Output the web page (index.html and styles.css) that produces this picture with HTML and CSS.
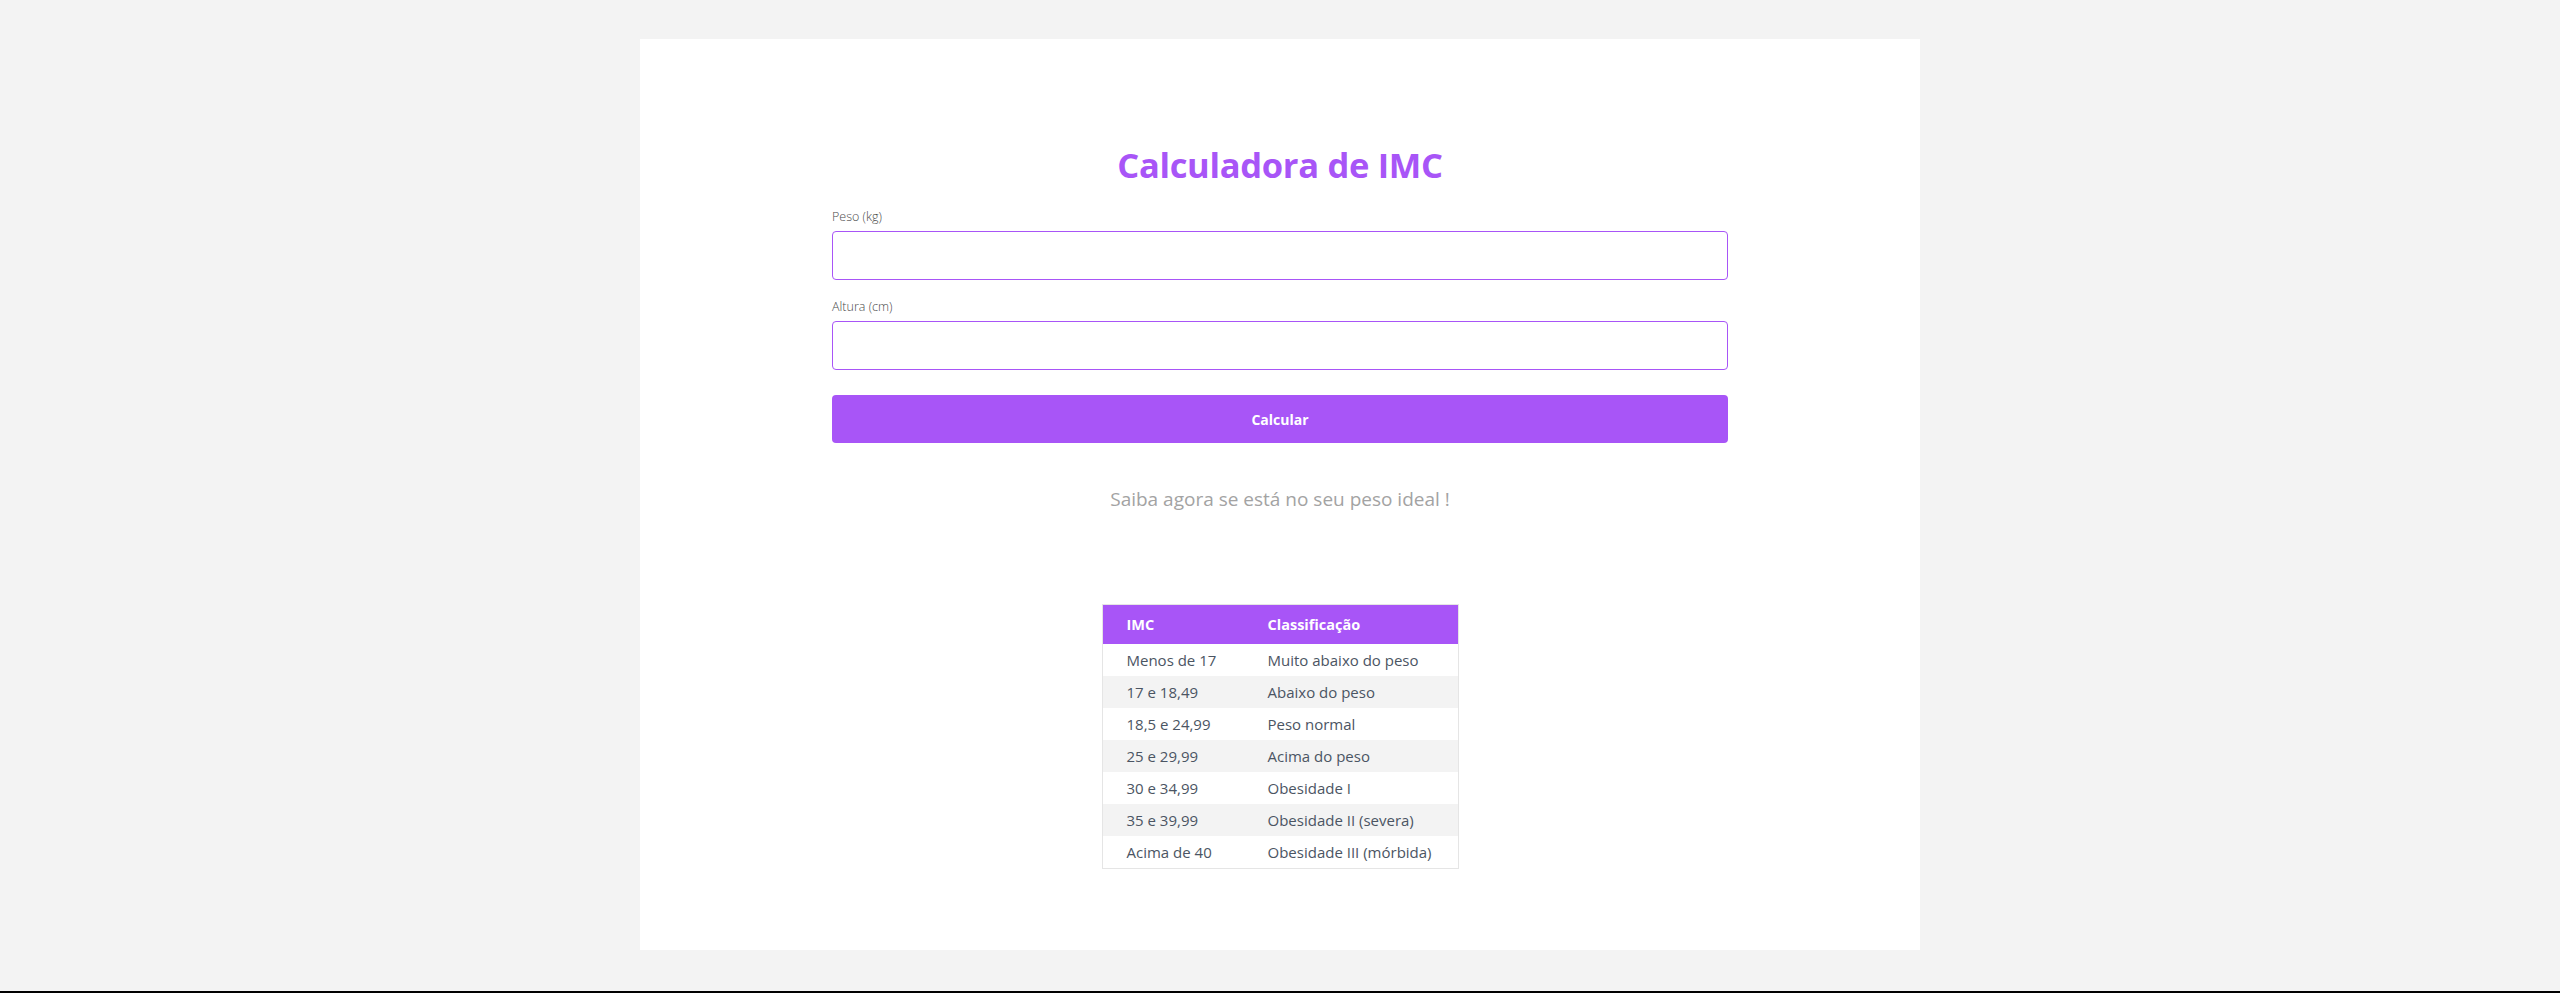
FILE: index.html
```html
<!DOCTYPE html>
<html lang="pt-BR">
<head>
<meta charset="utf-8">
<title>Calculadora de IMC</title>
<link rel="stylesheet" href="styles.css">
</head>
<body>
<div class="page">
  <main class="card">
    <h1 class="title">Calculadora de IMC</h1>
    <form class="form">
      <div class="field">
        <label class="label" for="peso">Peso (kg)</label>
        <input class="input" id="peso" type="number">
      </div>
      <div class="field">
        <label class="label" for="altura">Altura (cm)</label>
        <input class="input" id="altura" type="number">
      </div>
      <button class="button" type="button">Calcular</button>
    </form>
    <p class="subtitle">Saiba agora se está no seu peso ideal !</p>
    <table class="table">
      <thead>
        <tr><th class="col1">IMC</th><th class="col2">Classificação</th></tr>
      </thead>
      <tbody>
        <tr><td>Menos de 17</td><td>Muito abaixo do peso</td></tr>
        <tr><td>17 e 18,49</td><td>Abaixo do peso</td></tr>
        <tr><td>18,5 e 24,99</td><td>Peso normal</td></tr>
        <tr><td>25 e 29,99</td><td>Acima do peso</td></tr>
        <tr><td>30 e 34,99</td><td>Obesidade I</td></tr>
        <tr><td>35 e 39,99</td><td>Obesidade II (severa)</td></tr>
        <tr><td>Acima de 40</td><td>Obesidade III (mórbida)</td></tr>
      </tbody>
    </table>
  </main>
</div>
</body>
</html>
```

FILE: styles.css
```css
html, body {
  margin: 0;
  padding: 0;
  background: #f3f3f3;
}

body {
  font-family: "Open Sans", "Noto Sans", sans-serif;
}

.page {
  box-sizing: border-box;
  height: 993px;
  padding-top: 39px;
  border-bottom: 2px solid #000;
}

.card {
  box-sizing: border-box;
  width: 1280px;
  height: 911px;
  margin: 0 auto;
  background: #fff;
  padding: 106px 0 80px;
  display: flex;
  flex-direction: column;
  align-items: center;
}

.title {
  margin: 0 0 24px;
  font-size: 34.5px;
  line-height: 40px;
  font-weight: 700;
  color: #a855f7;
  letter-spacing: -0.3px;
}

.form {
  width: 896px;
  display: flex;
  flex-direction: column;
}

.field {
  display: flex;
  flex-direction: column;
  margin-bottom: 19px;
}

.field + .field {
  margin-bottom: 25px;
}

.label {
  font-size: 12.5px;
  line-height: 16px;
  font-weight: 300;
  color: #4b4b4b;
  margin-bottom: 6px;
}

.input {
  box-sizing: border-box;
  height: 49px;
  border: 1px solid #a855f7;
  border-radius: 4px;
  background: #fff;
  outline: none;
}

.button {
  box-sizing: border-box;
  height: 48px;
  border: none;
  border-radius: 4px;
  background: #a855f7;
  color: #fff;
  font-family: inherit;
  font-size: 14px;
  font-weight: 700;
}

.subtitle {
  margin: 42px 0 91px;
  font-size: 19px;
  line-height: 28px;
  color: #a3a3a3;
}

.table {
  width: 355px;
  table-layout: fixed;
  border-collapse: collapse;
  border: 1px solid #e5e5e5;
  font-size: 15px;
  color: #4b5563;
  text-align: left;
}

.table th {
  height: 39px;
  padding: 0 24px;
  background: #a855f7;
  color: #fff;
  font-weight: 700;
  font-size: 14.5px;
  white-space: nowrap;
}

.col1 {
  width: 93px;
}

.col2 {
  width: 166px;
}

.table td {
  height: 32px;
  padding: 0 24px;
  white-space: nowrap;
}

.table tbody tr:nth-child(even) {
  background: #f3f3f3;
}
```
